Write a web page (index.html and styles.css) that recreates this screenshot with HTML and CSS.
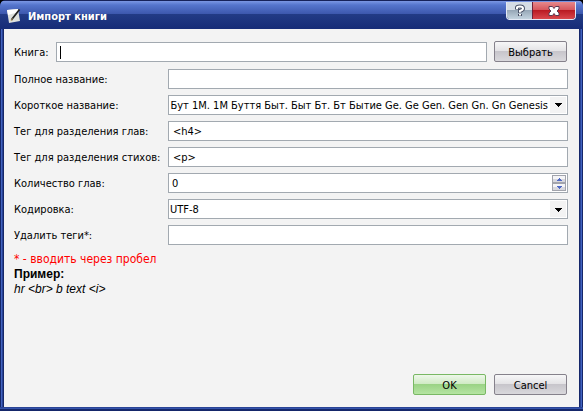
FILE: index.html
```html
<!DOCTYPE html>
<html lang="ru">
<head>
<meta charset="utf-8">
<title>Импорт книги</title>
<link rel="stylesheet" href="styles.css">
</head>
<body>
<main class="window">
  <header class="titlebar">
    <svg class="app-icon" width="14" height="16" viewBox="0 0 14 16" aria-hidden="true">
      <path d="M0 2 11 1 13 13 2 15Z" fill="#dfe2de"/>
      <path d="M0 2 11 1 11.500 4 1 7Z" fill="#fff"/>
      <path d="M12.500 1.500 5.500 10.500 4.500 12" stroke="#222" stroke-width="1.800" fill="none"/>
      <path d="M5.500 10.500 4 13" stroke="#b79b62" stroke-width="1"/>
    </svg>
    <h1 class="title">Импорт книги</h1>
    <div class="window-controls">
      <button class="control help" type="button" aria-label="Справка">
        <svg width="12" height="14" viewBox="0 0 12 14" aria-hidden="true">
          <path d="M3 5.500V3.500Q3 2.500 6 2.500T9 4.500Q9 6 6 7V9M6 10V12" fill="none" stroke="#4a5268" stroke-width="4"/>
          <path d="M3 5V3.500Q3 2.500 6 2.500T9 4.500Q9 6 6 7V8.500M6 10V11.500" fill="none" stroke="#fff" stroke-width="2"/>
        </svg>
      </button>
      <button class="control close" type="button" aria-label="Закрыть">
        <svg width="14" height="12" viewBox="0 0 14 12" aria-hidden="true">
          <path d="M2 1.500H5.500L7 3.500 8.500 1.500H12V4L10 6 12 8V10.500H8.500L7 8.500 5.500 10.500H2V8L4 6 2 4Z" fill="#fff" stroke="#5c3850" stroke-width="1"/>
        </svg>
      </button>
    </div>
  </header>
  <form class="content">
    <div class="book-row">
      <label for="book">Книга:</label>
      <input class="field focused" id="book" type="text">
      <button class="button" type="button">Выбрать</button>
    </div>
    <div class="fields">
      <label for="full">Полное название:</label>
      <input class="field" id="full" type="text">
      <label for="short">Короткое название:</label>
      <div class="field combo">
        <input class="combo-text" id="short" type="text" value="Бут. Бут 1М. 1М Буття Быт. Быт Бт. Бт Бытие Ge. Ge Gen. Gen Gn. Gn Genesis">
        <button class="combo-button" type="button" aria-label="Открыть список">
          <svg width="7" height="4" viewBox="0 0 7 4" aria-hidden="true"><path d="M0 0H7V1H6V2H5V3H4V4H3V3H2V2H1V1H0Z"/></svg>
        </button>
      </div>
      <label for="chapter">Тег для разделения глав:</label>
      <input class="field" id="chapter" type="text" value="&lt;h4&gt;">
      <label for="verse">Тег для разделения стихов:</label>
      <input class="field" id="verse" type="text" value="&lt;p&gt;">
      <label for="count">Количество глав:</label>
      <div class="field spin">
        <input class="spin-text" id="count" type="text" inputmode="numeric" value="0">
        <div class="spin-buttons">
          <button type="button" aria-label="Больше"><svg width="5" height="3" viewBox="0 0 5 3" aria-hidden="true"><path d="M2 0H3V1H4V2H5V3H0V2H1V1H2Z"/></svg></button>
          <button type="button" aria-label="Меньше"><svg width="5" height="3" viewBox="0 0 5 3" aria-hidden="true"><path d="M0 0H5V1H4V2H3V3H2V2H1V1H0Z"/></svg></button>
        </div>
      </div>
      <label for="encoding">Кодировка:</label>
      <div class="field select-box">
        <select id="encoding"><option>UTF-8</option></select>
        <svg class="select-arrow" width="7" height="4" viewBox="0 0 7 4" aria-hidden="true"><path d="M0 0H7V1H6V2H5V3H4V4H3V3H2V2H1V1H0Z"/></svg>
      </div>
      <label for="remove">Удалить теги*:</label>
      <input class="field" id="remove" type="text">
    </div>
    <div class="note">
      <p class="hint">* - вводить через пробел</p>
      <p class="example-title">Пример:</p>
      <p class="example">hr &lt;br&gt; b text &lt;i&gt;</p>
    </div>
    <footer class="actions">
      <button class="button primary" type="submit">OK</button>
      <button class="button" type="button">Cancel</button>
    </footer>
  </form>
</main>
</body>
</html>
```
FILE: styles.css
```css
* { box-sizing: border-box; }

body {
  margin: 0;
  background: #000;
  color: #000;
  font: 11px/14px "DejaVu Sans Condensed", "DejaVu Sans", sans-serif;
}

button, input, select { font: inherit; color: inherit; margin: 0; }

.window {
  display: flex;
  flex-direction: column;
  min-height: 100vh;
  padding-bottom: 4px;
  border-radius: 6px 6px 0 0;
  background:
    linear-gradient(#2a4496 1px, #3453ab 1px 2px, #15276a 2px) bottom / 100% 4px no-repeat,
    linear-gradient(90deg, #15276a 1px, #4263c0 1px 2px, #2a4496 2px 3px, #15276a 3px calc(100% - 3px), #2a4496 calc(100% - 3px) calc(100% - 2px), #4263c0 calc(100% - 2px) calc(100% - 1px), #15276a calc(100% - 1px));
}

.titlebar {
  display: flex;
  align-items: center;
  height: 29px;
  padding: 2px 7px 0;
  border-radius: 6px 6px 0 0;
  background: linear-gradient(#16225a 1px, #7b97e4 1px, #5575cd 5px, #3c57ad 14px, #223b86 14px, #172d78 28px);
}

.title {
  margin: 0 auto 0 7px;
  padding-top: 3px;
  color: #fff;
  font: bold 11px/14px "DejaVu Sans Condensed", sans-serif;
}

.window-controls {
  display: flex;
  align-self: flex-start;
  height: 18px;
  border: 1px solid #e4e9f5;
  border-top: 0;
  border-radius: 0 0 4px 4px;
  overflow: hidden;
}

.control {
  display: flex;
  align-items: center;
  justify-content: center;
  padding: 0;
  border: 0;
}

.help { width: 25px; background: linear-gradient(#d5dce5 8px, #94a5b5 8px, #c3d3df); }
.close { width: 43px; border-left: 1px solid #702038; background: linear-gradient(#e6898c, #d6555b 8px, #b81820 8px, #d9474c); }

.content {
  flex: 1;
  display: flex;
  flex-direction: column;
  margin: 0 4px;
  padding: 12px 11px 12px 10px;
  background: #f3f3f3;
}

label { padding-top: 2px; }

.book-row {
  display: flex;
  align-items: center;
  gap: 7px;
  margin-bottom: 7px;
  padding-right: 1px;
}

.fields {
  display: grid;
  grid-template-columns: 147px 1fr;
  grid-auto-rows: 20px;
  align-items: center;
  gap: 6px 7px;
}

.field {
  width: 100%;
  min-width: 0;
  height: 20px;
  padding: 1px 4px 0;
  border: 1px solid #a2a9b0;
  border-radius: 0;
  background: #fff;
  outline: none;
}

.book-row .field { flex: 1; }
.focused { background: linear-gradient(#000, #000) 3px 3px / 1px 13px no-repeat #fff; }

.combo, .spin, .select-box { display: flex; padding: 1px; }

.combo-text, .spin-text {
  flex: 1;
  min-width: 0;
  padding: 2px 2px 0 0;
  border: 0;
  background: #fff;
  outline: none;
}

.combo-text { direction: rtl; }
.spin-text { padding-left: 2px; }

.combo-button {
  display: flex;
  align-items: center;
  justify-content: center;
  width: 16px;
  padding: 0;
  border: 0;
  background: #f3f3f3;
}

.spin-buttons { display: flex; flex-direction: column; width: 14px; }

.spin-buttons button {
  flex: 1;
  display: flex;
  align-items: center;
  justify-content: center;
  padding: 0;
  border: 1px solid #a2a4ac;
  background: linear-gradient(#f5f5f7 50%, #d8d8de 50%);
  fill: #4e68c4;
}

.select-box { position: relative; }

.select-box select {
  width: 100%;
  padding: 1px 0 0;
  border: 0;
  border-radius: 0;
  appearance: none;
  background: linear-gradient(90deg, #fff calc(100% - 16px), #f3f3f3 calc(100% - 16px));
  outline: none;
}

.select-arrow { position: absolute; right: 5px; top: 8px; pointer-events: none; }

.button {
  width: 73px;
  height: 21px;
  padding: 2px 0 0;
  border: 1px solid #85818b;
  border-radius: 2px;
  background: linear-gradient(#f7f7f8, #e3e2e5 9px, #c6c4ca 9px, #d9d8dc);
}

.primary {
  border-color: #79b864;
  background: linear-gradient(#eef7ea, #cfeac4 9px, #99d284 9px, #b5e4a2);
}

.note { margin-top: 7px; font: 12px/15px "Liberation Sans", sans-serif; }
.note p { margin: 0; }
.hint { color: #f00; font-family: "DejaVu Sans Condensed", sans-serif; }
.example-title { font-weight: bold; }
.example { font-style: italic; }

.actions {
  display: flex;
  justify-content: flex-end;
  gap: 8px;
  margin-top: auto;
  padding-right: 1px;
}
```
